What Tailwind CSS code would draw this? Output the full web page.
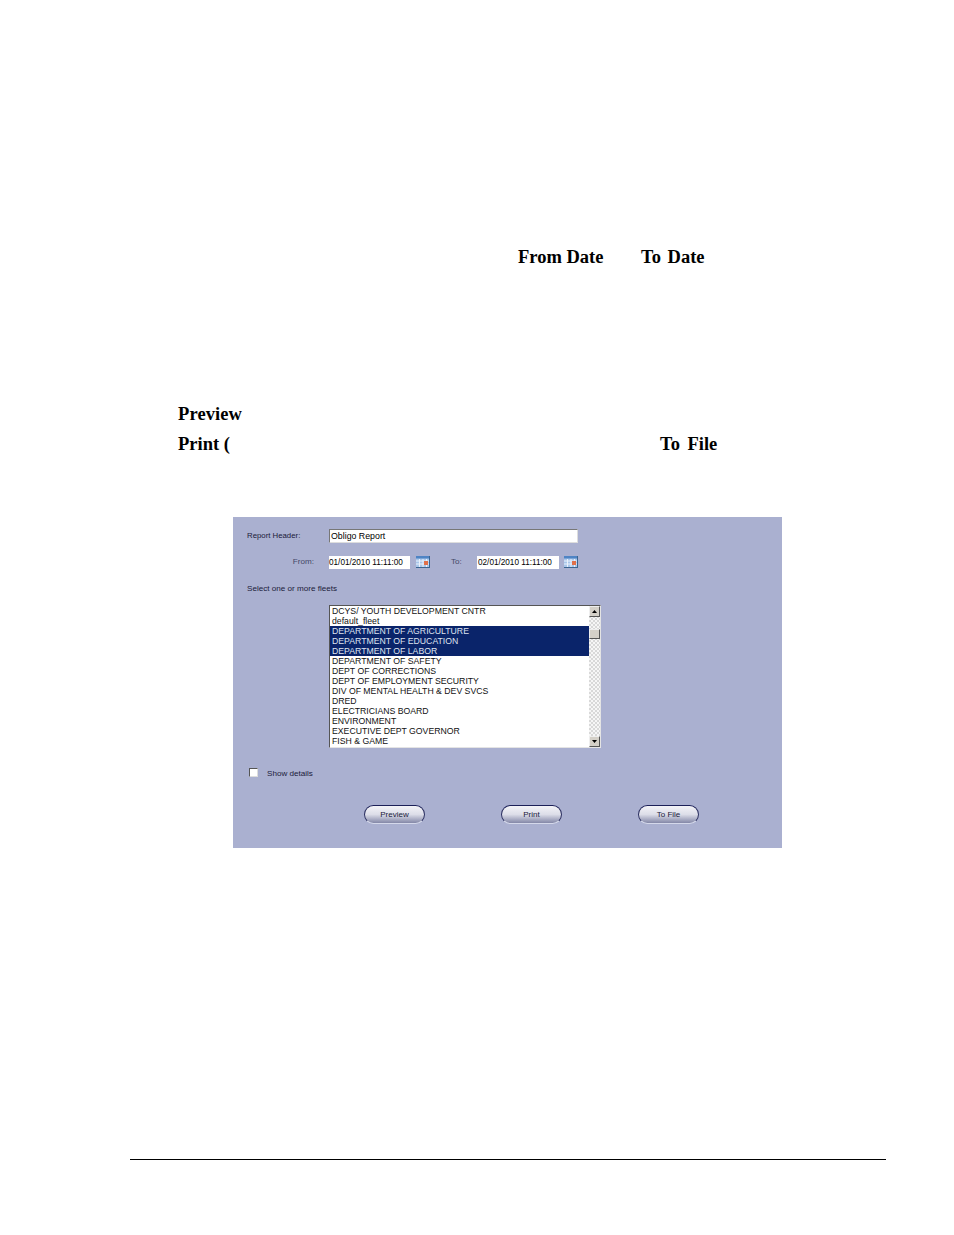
<!DOCTYPE html>
<html lang="en">
<head>
<meta charset="UTF-8">
<title>Obligo Report</title>
<script src="https://cdn.jsdelivr.net/npm/@tailwindcss/browser@4"></script>
</head>
<body class="bg-white w-[954px] h-[1235px] overflow-hidden font-['Liberation_Serif',serif] text-black">

<div class="pt-[247px] h-[403px]">
  <div class="flex font-bold text-[18.5px] leading-[21px] pl-[518px]">
    <span class="w-[123px]">From Date</span>
    <span class="[word-spacing:2px]">To Date</span>
  </div>
  <div class="mt-[136px] pl-[178px] font-bold text-[18.5px] leading-[21px] tracking-[0.1px]">Preview</div>
  <div class="mt-[9px] pl-[178px] flex font-bold text-[18.5px] leading-[21px]">
    <span class="w-[482px]">Print (</span>
    <span class="[word-spacing:3px]">To File</span>
  </div>
</div>

<div class="mt-[114px] ml-[233px] w-[549px] h-[331px] bg-[#aab0d0] font-['Liberation_Sans',sans-serif] text-[8.1px] text-[#1a1a3a] pt-[12px]">
  <!-- header -->
  <div class="flex items-center h-[14px]">
    <span class="pl-[14px] w-[96px] text-[7.8px]">Report Header:</span>
    <div class="w-[249px] h-[14px] bg-white border border-[#777] border-r-[#ddd] border-b-[#ddd] px-[1px] text-[8.8px] leading-[12px] text-black">Obligo Report</div>
  </div>
  <!-- dates -->
  <div class="flex items-center h-[14px] mt-[12px]">
    <span class="w-[81px] text-right text-[#444866]">From:</span>
    <div class="ml-[15px] w-[81px] h-[13px] bg-white text-[8.2px] leading-[13px] text-black whitespace-nowrap">01/01/2010 11:11:00</div>
    <svg class="ml-[6px]" width="14" height="12" viewBox="0 0 14 12">
      <rect width="14" height="12" fill="#a9c6ea"/>
      <rect width="14" height="2.5" fill="#4f84c4"/>
      <path d="M0 5H14M0 8H14M3.5 3V12M7 3V12M10.500 3V12" stroke="#eaf1fb"/>
      <rect x="8" y="5" width="4" height="4" fill="#e0704a"/>
      <path d="M13.500 0V12M0 11.500H14" stroke="#3a6490"/>
    </svg>
    <span class="ml-[21px] w-[26px] text-[#444866]">To:</span>
    <div class="w-[82px] h-[13px] bg-white text-[8.2px] leading-[13px] px-[1px] text-black whitespace-nowrap">02/01/2010 11:11:00</div>
    <svg class="ml-[5px]" width="14" height="12" viewBox="0 0 14 12">
      <rect width="14" height="12" fill="#a9c6ea"/>
      <rect width="14" height="2.5" fill="#4f84c4"/>
      <path d="M0 5H14M0 8H14M3.5 3V12M7 3V12M10.500 3V12" stroke="#eaf1fb"/>
      <rect x="8" y="5" width="4" height="4" fill="#e0704a"/>
      <path d="M13.500 0V12M0 11.500H14" stroke="#3a6490"/>
    </svg>
  </div>
  <div class="pl-[14px] mt-[14px] h-[12px] leading-[12px]">Select one or more fleets</div>

  <!-- fleet list -->
  <div class="ml-[96px] mt-[10px] w-[272px] h-[143px] flex bg-white border border-[#555] border-r-[#e4e4e4] border-b-[#e4e4e4] text-[8.7px] leading-[10px] text-[#111]">
    <div class="w-[259px] whitespace-nowrap">
      <div class="px-[2px] h-[10px]">DCYS/ YOUTH DEVELOPMENT CNTR</div>
      <div class="px-[2px] h-[10px]">default_fleet</div>
      <div class="px-[2px] h-[10px] bg-[#0a246a] text-[#dfe3f0]">DEPARTMENT OF AGRICULTURE</div>
      <div class="px-[2px] h-[10px] bg-[#0a246a] text-[#dfe3f0]">DEPARTMENT OF EDUCATION</div>
      <div class="px-[2px] h-[10px] bg-[#0a246a] text-[#dfe3f0]">DEPARTMENT OF LABOR</div>
      <div class="px-[2px] h-[10px]">DEPARTMENT OF SAFETY</div>
      <div class="px-[2px] h-[10px]">DEPT OF CORRECTIONS</div>
      <div class="px-[2px] h-[10px]">DEPT OF EMPLOYMENT SECURITY</div>
      <div class="px-[2px] h-[10px]">DIV OF MENTAL HEALTH &amp; DEV SVCS</div>
      <div class="px-[2px] h-[10px]">DRED</div>
      <div class="px-[2px] h-[10px]">ELECTRICIANS BOARD</div>
      <div class="px-[2px] h-[10px]">ENVIRONMENT</div>
      <div class="px-[2px] h-[10px]">EXECUTIVE DEPT GOVERNOR</div>
      <div class="px-[2px] h-[10px]">FISH &amp; GAME</div>
    </div>
    <!-- scrollbar -->
    <div class="w-[11px] flex flex-col bg-[repeating-conic-gradient(#d8d8d8_0_25%,#f6f6f6_0_50%)] bg-[length:4px_4px]">
      <div class="h-[11px] bg-[#d4d0c8] border border-[#eee] border-r-[#555] border-b-[#555] flex items-center justify-center">
        <svg width="5" height="3" viewBox="0 0 5 3"><path d="M2.5 0L5 3H0Z" fill="#000"/></svg>
      </div>
      <div class="mt-[12px] h-[10px] bg-[#d4d0c8] border border-[#eee] border-r-[#555] border-b-[#555]"></div>
      <div class="mt-auto h-[11px] bg-[#d4d0c8] border border-[#eee] border-r-[#555] border-b-[#555] flex items-center justify-center">
        <svg width="5" height="3" viewBox="0 0 5 3"><path d="M0 0H5L2.5 3Z" fill="#000"/></svg>
      </div>
    </div>
  </div>

  <!-- show details -->
  <div class="flex items-center mt-[19px] h-[12px]">
    <div class="ml-[16px] mb-[2px] w-[9px] h-[9px] bg-white border border-[#555] border-r-[#ddd] border-b-[#ddd]"></div>
    <span class="ml-[9px] mt-[2px]">Show details</span>
  </div>

  <!-- buttons -->
  <div class="flex mt-[26px] pl-[131px] text-[8px] text-[#1a1a3a]">
    <button class="w-[61px] h-[19px] rounded-full border border-[#2c3060] border-t-[#1c2058] border-b-[#d4d8ea] bg-gradient-to-b from-[#f4f4f8] via-[#dcdde8] to-[#8488a8]">Preview</button>
    <button class="ml-[76px] w-[61px] h-[19px] rounded-full border border-[#2c3060] border-t-[#1c2058] border-b-[#d4d8ea] bg-gradient-to-b from-[#f4f4f8] via-[#dcdde8] to-[#8488a8]">Print</button>
    <button class="ml-[76px] w-[61px] h-[19px] rounded-full border border-[#2c3060] border-t-[#1c2058] border-b-[#d4d8ea] bg-gradient-to-b from-[#f4f4f8] via-[#dcdde8] to-[#8488a8]">To File</button>
  </div>
</div>

<div class="mt-[311px] ml-[130px] w-[756px] h-px bg-black"></div>
</body>
</html>
